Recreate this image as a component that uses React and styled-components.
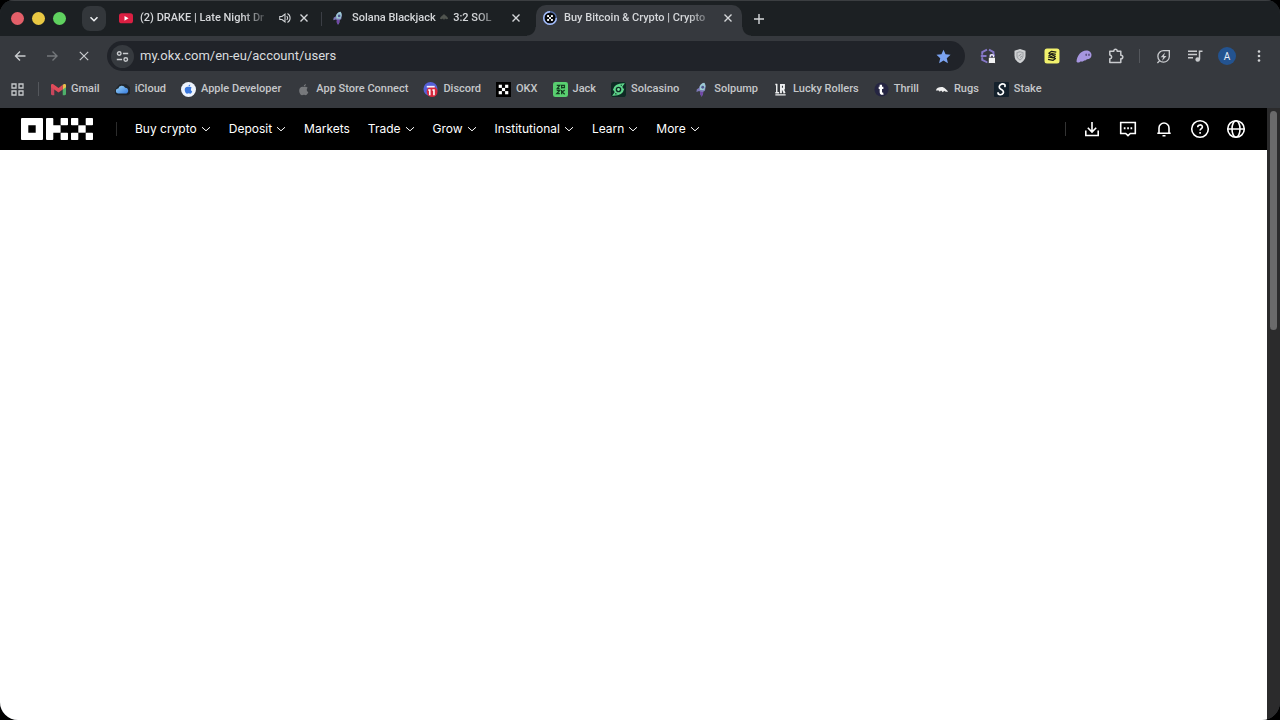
import React from "react";
import styled, { createGlobalStyle } from "styled-components";

const GlobalStyle = createGlobalStyle`
  *, *::before, *::after { box-sizing: border-box; }
  html, body { margin: 0; background: #000; }
  body { font-family: Roboto, "Liberation Sans", sans-serif; }
  button, input { font: inherit; color: inherit; border: 0; background: none; padding: 0; margin: 0; outline: none; }
  button { cursor: pointer; }
  a { color: inherit; text-decoration: none; }
  svg { display: block; flex: none; }
`;

const Window = styled.div`
  display: flex;
  flex-direction: column;
  min-height: 100vh;
  overflow: hidden;
  border-radius: 14px 14px 18px 18px;
  background: #36393e;
`;

const TabStrip = styled.div`
  display: flex;
  align-items: stretch;
  height: 36px;
  padding-left: 11px;
  background: #1c2023;
  border-top: 1px solid #3b3e41;
  color: #d5d7da;
`;

const Lights = styled.div`
  display: flex;
  align-items: center;
  gap: 8px;
`;

const Light = styled.button`
  width: 13px;
  height: 13px;
  border-radius: 50%;
  background: ${(p) => p.$color};
`;

const TabSearch = styled.button`
  display: flex;
  align-items: center;
  justify-content: center;
  align-self: center;
  width: 24px;
  height: 25px;
  margin: 0 6px 0 16px;
  border-radius: 8px;
  background: #33373b;
  color: #eceef0;
`;

const Tab = styled.div`
  position: relative;
  display: flex;
  align-items: center;
  flex: 0 1 206px;
  min-width: 0;
  gap: 7px;
  margin-top: 4px;
  padding: 0 9px 5px 7px;
  border-radius: 10px 10px 0 0;
  font-size: 11px;
  font-weight: 500;
  line-height: 16px;
  background: ${(p) => (p.$active ? "#36393e" : "transparent")};
  &::before, &::after {
    content: ${(p) => (p.$active ? '""' : "none")};
    position: absolute;
    bottom: 0;
    width: 9px;
    height: 9px;
  }
  &::before { right: 100%; background: radial-gradient(circle at 0 0, transparent 8px, #36393e 9px); }
  &::after { left: 100%; background: radial-gradient(circle at 100% 0, transparent 8px, #36393e 9px); }
`;

const TabTitle = styled.span`
  display: flex;
  align-items: center;
  flex: 1;
  min-width: 0;
  overflow: hidden;
  white-space: pre;
  mask-image: linear-gradient(to right, #000 calc(100% - 28px), transparent);
`;

const TabDivider = styled.span`
  align-self: center;
  width: 1px;
  height: 14px;
  margin: 0 2px 0 3px;
  background: ${(p) => (p.$hidden ? "transparent" : "#3b3e45")};
`;

const IconButton = styled.button`
  display: flex;
  align-items: center;
  justify-content: center;
  flex: none;
  width: ${(p) => p.$width || 10}px;
  height: ${(p) => p.$height || 16}px;
  color: ${(p) => (p.$dim ? "#74777b" : "inherit")};
`;

const NewTab = styled(IconButton)`
  align-self: center;
  margin-left: 5px;
`;

const Toolbar = styled.div`
  display: flex;
  align-items: center;
  height: 40px;
  padding: 0 5px 0 4px;
  color: #c9cbce;
`;

const AddressBar = styled.label`
  display: flex;
  align-items: center;
  flex: 1;
  min-width: 0;
  height: 30px;
  margin: 0 7px;
  padding: 0 14px 0 4px;
  border-radius: 15px;
  background: #202329;
`;

const SiteInfo = styled.button`
  display: flex;
  align-items: center;
  justify-content: center;
  width: 23px;
  height: 23px;
  border-radius: 50%;
  background: #363a3f;
`;

const Address = styled.input`
  flex: 1;
  min-width: 0;
  margin-left: 6px;
  font-size: 13px;
  line-height: 18px;
  color: #d9dbde;
`;

const Divider = styled.span`
  flex: none;
  width: ${(p) => p.$width || 1}px;
  height: 14px;
  margin: ${(p) => p.$margin};
  background: ${(p) => p.$color || "#54575c"};
`;

const Avatar = styled.span`
  display: flex;
  align-items: center;
  justify-content: center;
  width: 18px;
  height: 18px;
  border-radius: 50%;
  background: #235390;
  color: #e8eef8;
  font-size: 10px;
`;

const Bookmarks = styled.nav`
  display: flex;
  align-items: center;
  gap: 15px;
  height: 32px;
  padding: 0 10px 6px 11px;
  color: #c5c7ca;
`;

const Bookmark = styled.a`
  display: flex;
  align-items: center;
  flex: none;
  gap: 5px;
  font-size: 11px;
  font-weight: 500;
  line-height: 16px;
  white-space: nowrap;
`;

const Viewport = styled.div`
  display: flex;
  flex: 1;
`;

const Page = styled.div`
  display: flex;
  flex-direction: column;
  flex: 1;
  min-width: 0;
  background: #fff;
`;

const SiteHeader = styled.header`
  display: flex;
  align-items: center;
  justify-content: space-between;
  height: 42px;
  padding: 0 21px;
  background: #000;
  color: #fff;
`;

const HeaderGroup = styled.div`
  display: flex;
  align-items: center;
  gap: ${(p) => p.$gap}px;
`;

const NavItem = styled.button`
  display: flex;
  align-items: center;
  gap: 4px;
  font-family: Inter, "Liberation Sans", sans-serif;
  font-size: 12px;
  line-height: 18px;
  white-space: nowrap;
`;

const Scrollbar = styled.div`
  width: 13px;
  padding: 3px 3px 0;
  background: #2b2b2c;
`;

const Thumb = styled.div`
  width: 7px;
  height: 36%;
  border-radius: 4px;
  background: #6a6a6b;
`;

const Stroke = ({ size = 16, box = 16, width = 1.4, children }) => (
  <svg width={size} height={size} viewBox={`0 0 ${box} ${box}`} fill="none" stroke="currentColor" strokeWidth={width} aria-hidden="true">
    {children}
  </svg>
);

const Close = ({ size = 10 }) => (
  <Stroke size={size} box={10} width={size > 10 ? 1 : 1.4}><path d="M1.500 1.500l7 7M8.500 1.500l-7 7" /></Stroke>
);

const Chevron = () => (
  <Stroke size={10} box={10} width={1}><path d="M1 3.200l4 3.600 4-3.600" /></Stroke>
);

const Art = ({ size = 15, children }) => (
  <svg width={size} height={size} viewBox="0 0 16 16" aria-hidden="true">{children}</svg>
);

const YouTube = () => (
  <Art size={14}>
    <rect x="0" y="2.5" width="16" height="11.5" rx="3" fill="#db1f42" />
    <path d="M6.3 5.6l4.6 2.7-4.6 2.7z" fill="#fff" />
  </Art>
);

const Rocket = ({ size }) => (
  <Art size={size}>
    <path d="M10.800.8C7.800 1.400 5.800 3.400 5.600 6L3 7.600l-.4 3 2.800-.9 1.400.7-.3 2.200L8 15.600l1.600-2.300.3-2.900 1.800-1 .7-4.200c0-1.900-.5-3.400-1.600-4.400z" fill="#7d79b8" />
    <path d="M10.800.8C8.300 1.400 6.500 3 6 5.200l.3 3.300 4.600.4 1.200-3.800C12.200 3.300 11.700 1.800 10.800.8z" fill="#9ccbd2" />
    <circle cx="9.300" cy="5.600" r="1.500" fill="#4e5690" />
    <path d="M6.600 10.300l3.100.3-.4 2.800L8 15.600l-1.400-2.800z" fill="#7146a5" />
  </Art>
);

const checker = (x, y, s) => [[0, 0], [2, 0], [1, 1], [0, 2], [2, 2]].map(([c, r]) => (
  <rect key={`${c}${r}`} x={x + c * s} y={y + r * s} width={s} height={s} />
));

const LoadingOkx = () => (
  <Art size={14}>
    <circle cx="8" cy="8" r="7.200" fill="#07090c" stroke="#526ba3" strokeWidth="1.600" />
    <path d="M8 .8A7.200 7.200 0 1 0 15.200 8" fill="none" stroke="#a5bdf8" strokeWidth="1.600" />
    <g fill="#fff">{checker(4.7, 4.7, 2.2)}</g>
  </Art>
);

const Speaker = () => (
  <Stroke size={12} width={1.4}>
    <path d="M1 6v4h3l4 3.300V2.700L4 6zM10.300 5.400c1.600 1.300 1.600 3.900 0 5.200M11.300 2c4.700 2.500 4.700 9.500 0 12" />
  </Stroke>
);

const Spade = () => (
  <svg width="12" height="12" viewBox="0 0 12 12" aria-hidden="true">
    <path d="M6 2c.8 1.500 4 2.700 4 4.300 0 1-1.600 1.200-2.500.4L7 6.500 6 8 5 6.500l-.5.2C3.600 7.500 2 7.300 2 6.300 2 4.700 5.200 3.500 6 2z" fill="#50544f" />
  </svg>
);

const Arrow = ({ flip }) => (
  <Stroke size={16} width={1.4}>
    <path d={flip ? "M3 8h10M8.500 3.500L13 8l-4.500 4.500" : "M13.500 8h-10M8 3.500L3.500 8 8 12.500"} />
  </Stroke>
);

const Tune = () => (
  <Stroke size={13} width={1.7}>
    <circle cx="4" cy="4.300" r="2.200" /><path d="M8.500 4.300H15M1 11.700h6.500" /><circle cx="12" cy="11.700" r="2.200" />
  </Stroke>
);

const Star = () => (
  <Art size={15}>
    <path d="M8 .8l2.200 4.900 5.300.5-4 3.600 1.200 5.300L8 12.300l-4.700 2.800 1.200-5.300-4-3.600 5.300-.5z" fill="#7ba3f2" />
  </Art>
);

const BracketLock = () => (
  <Art size={16}>
    <g fill="none" stroke="#8577c6" strokeWidth="1.900">
      <path d="M7 1.600L2.200 4.100v2.600M.8 8h5.700M2.200 9.300v2.500L7.500 14.500" />
      <path d="M9 1.600l4.500 2.500v2.600M9.500 7.500H15" />
    </g>
    <rect x="8.300" y="9.200" width="7.200" height="6.300" rx=".8" fill="#f2f2f3" stroke="#202124" strokeWidth=".8" />
    <path d="M10.200 9.200V8.300a1.700 1.700 0 0 1 3.400 0v.9" fill="none" stroke="#f2f2f3" strokeWidth="1.200" />
  </Art>
);

const Shield = () => (
  <Art size={16}>
    <path d="M8 1l5.500 1.700v5.100c0 3.600-2.500 6-5.500 7.500-3-1.500-5.500-3.900-5.500-7.500V2.700z" fill="#cfd1d3" />
    <path d="M8 3.700l3 1v3.200c0 1.700-1.300 3.100-3 4.100-1.700-1-3-2.400-3-4.100V4.700z" fill="none" stroke="#a3a6aa" strokeWidth="1.200" />
    <path d="M6.500 8l3-2M8 9.500l2-1.500" stroke="#94979b" />
  </Art>
);

const YellowS = () => (
  <Art size={16}>
    <rect x=".5" y=".5" width="15" height="15" rx="2.500" fill="#f2f26d" />
    <g fill="none" stroke="#1e1f16" strokeWidth="1.200" strokeLinejoin="round">
      <path d="M12.300 4.200L7.500 3.300 4.800 5.300l6.500 3.100-2 1.600L4 9M11.800 6.300L8 5.600 5 7.500l6.500 3-2.300 1.800L4 11.300" />
    </g>
  </Art>
);

const Ghost = () => (
  <Art size={16}>
    <path d="M.5 13.500C1 7.500 5 2.500 10.200 2.500c3.200 0 5.300 1.800 5.300 4.500 0 3-2.400 4.400-4.600 4.300-.8 1.100-1.800 1.500-2.700 1.200-.9 1-2.200 1.500-3.300.8C3.600 14.700 1 15.200.5 13.500z" fill="#a796e0" />
    <rect x="9.500" y="5.500" width="1.400" height="2.600" rx=".7" fill="#5b5080" /><rect x="12.300" y="5.500" width="1.400" height="2.600" rx=".7" fill="#5b5080" />
  </Art>
);

const Puzzle = () => (
  <Stroke size={16} width={1.5}>
    <path d="M1.800 3.200h4c-.2-2.700 3.600-2.700 3.400 0h3.600v4c2.700 0 2.700 3.600 0 3.600v3.600h-11v-3.700c2.400.2 2.400-3.600 0-3.600z" strokeLinejoin="round" />
  </Stroke>
);

const Energy = () => (
  <Stroke size={15} width={1.4}>
    <path d="M14.200 1.800v6.400a6.100 6.100 0 1 1-6.100-6.400zM3.600 12.800L1.500 15" />
    <path d="M9.600 3.800L5 8.700h2.700l-1.300 4 4.800-5.300H8.500z" fill="currentColor" stroke="none" />
  </Stroke>
);

const Queue = () => (
  <Stroke size={16} width={1.5}>
    <path d="M1 3.300h9M1 6.500h9M1 9.700h5M12.500 11.500V3.300h3" /><circle cx="10.700" cy="11.500" r="1.600" fill="currentColor" />
  </Stroke>
);

const Dots = () => (
  <Art size={16}><g fill="#d2d4d6"><circle cx="8" cy="3.500" r="1.300" /><circle cx="8" cy="8" r="1.300" /><circle cx="8" cy="12.500" r="1.300" /></g></Art>
);

const Apps = () => (
  <Stroke size={13} box={13} width={1.3}>
    <path d="M1 1h4v4H1zM8 1h4v4H8zM1 8h4v4H1zM8 8h4v4H8z" />
  </Stroke>
);

const Gmail = () => (
  <Art>
    <path d="M0 4h3.500v10H1.200A1.200 1.200 0 0 1 0 12.800z" fill="#c8465c" />
    <path d="M12.500 4H16v8.800a1.200 1.200 0 0 1-1.200 1.200h-2.300z" fill="#4fb06a" />
    <path d="M12.500 3l1-.7A1.600 1.600 0 0 1 16 3.700v1.800l-3.500 2.600z" fill="#e8c04c" />
    <path d="M0 3.700a1.600 1.600 0 0 1 2.500-1.400L8 6.500l4.500-3.500v5L8 11.300 0 5.500z" fill="#e14b59" />
  </Art>
);

const ICloud = () => (
  <Art>
    <defs><linearGradient id="cloud" x1="0" x2="1" y2="1"><stop stopColor="#9dd7f6" /><stop offset="1" stopColor="#367be0" /></linearGradient></defs>
    <path d="M2.500 5L5 2.500h7l4 3V12l-2 2H2l-2-2V8.500z" fill="#20262b" />
    <path d="M3.800 12.300a2.700 2.700 0 0 1-.3-5.400 3.900 3.900 0 0 1 7.300-.7 3.200 3.200 0 0 1 1.500 6.100z" fill="url(#cloud)" />
  </Art>
);

const applePath = "M10.600 2c-.9.100-2.200.9-2.400 2.500 1.200.1 2.400-1 2.400-2.500zM12.500 6.200c-1.300-1.500-2.900-1.300-4.100-.8-1.400-.6-2.700-.5-3.900.6C2 8.600 4.300 14 6.400 14c.7 0 1.200-.5 2.100-.5s1.400.5 2.100.5c1 0 2-1.700 2.500-3-2-.9-2.200-3.600-.6-4.800z";

const AppleBlue = () => (
  <Art><circle cx="8" cy="8" r="8" fill="#edf3fc" /><path d={applePath} fill="#3977dc" transform="translate(1.200 1) scale(.82)" /></Art>
);

const AppleGrey = () => <Art><path d={applePath} fill="#77797c" /></Art>;

const Discord = () => (
  <Art>
    <circle cx="8" cy="7.500" r="7.500" fill="#5560d8" />
    <circle cx="9.700" cy="10.200" r="5.800" fill="#d7283d" />
    <path d="M4 5h8.500" stroke="#f4f0ff" strokeWidth="1.800" />
    <path d="M5.500 8.600h1.700v5.400M10 8.600h1.700v5.400" fill="none" stroke="#fff" strokeWidth="1.700" />
  </Art>
);

const OkxIcon = () => <Art><rect width="16" height="16" fill="#000" /><g fill="#fff">{checker(2.9, 2.9, 3.4)}</g></Art>;

const Jack = () => (
  <Art>
    <rect width="16" height="16" rx="2.500" fill="#59cf70" />
    <g fill="none" stroke="#143d20" strokeWidth="1.300"><path d="M4 3.500h3.200L4.500 7H7M9.200 7V3.500h3V6H9.500M4 9h3.200L4 12.500h3.200M9.200 8.500v4.500M12.500 8.500L9.800 10.700l2.700 2.300" /></g>
  </Art>
);

const Solcasino = () => (
  <Art>
    <rect width="16" height="16" rx="3" fill="#0e2a24" />
    <circle cx="8" cy="8" r="4" fill="none" stroke="#5fd68b" strokeWidth="2" />
    <path d="M2.500 9C3.500 4 8 2 13.500 2L11 5.500M13.500 7c-1 5-5.500 7-11 7L5 10.500" fill="none" stroke="#5fd68b" strokeWidth="1.300" />
    <circle cx="8" cy="8" r="1.500" fill="#76e39c" />
  </Art>
);

const Lucky = () => (
  <Art>
    <path d="M4 2v10M2.500 2.700h2M2.500 13.700h11M2.500 11.500h4" fill="none" stroke="#f0f1f2" strokeWidth="1.500" />
    <path d="M8.500 12V3h3.200v4H9.200M10.200 7l2.200 5" fill="none" stroke="#f0f1f2" strokeWidth="2" />
  </Art>
);

const Thrill = () => (
  <Art>
    <circle cx="8" cy="8" r="7.500" fill="#252542" />
    <path d="M7.300 2.800v8.200c0 1.500 1 1.600 2.700 1.300M5 6.200h5" fill="none" stroke="#fff" strokeWidth="2.500" />
  </Art>
);

const Rugs = () => (
  <Art>
    <path d="M2 9C2.800 6.500 5 5.400 8 5.400c3.300 0 4.300 2.500 7 4.600-1.500.9-3.200.3-4.200-.6L9.500 10.800 7.500 9l-1.300 1.500L5 9z" fill="#f0f0f0" />
  </Art>
);

const Stake = () => (
  <Art>
    <rect width="16" height="16" rx="1" fill="#14212c" />
    <path d="M11.700 4.800C12.600 2.400 10 1.700 8 2.300 5.200 3.200 4.800 6.200 7 7.400c2.800 1.500 3.800 2.600 2.800 4.500C8.600 14.300 4.300 14.200 4.300 11.500" fill="none" stroke="#fff" strokeWidth="1.800" strokeLinecap="round" />
  </Art>
);

const OkxLogo = () => (
  <svg width="72" height="22" viewBox="0 0 72 22" fill="#fff" role="img" aria-label="OKX">
    <path fillRule="evenodd" d="M1 0h20a1 1 0 0 1 1 1v20a1 1 0 0 1-1 1H1a1 1 0 0 1-1-1V1a1 1 0 0 1 1-1zM7.300 7.300v7.400h7.400V7.300z" />
    <path d="M26 0h5.300a1 1 0 0 1 1 1v6.300h7.300v7.400h-7.300V21a1 1 0 0 1-1 1H26a1 1 0 0 1-1-1V1a1 1 0 0 1 1-1z" />
    <rect x="39.600" width="7.400" height="7.300" rx=".8" /><rect x="39.600" y="14.700" width="7.400" height="7.300" rx=".8" />
    <rect x="50" width="7.300" height="7.300" rx=".8" /><rect x="64.700" width="7.300" height="7.300" rx=".8" />
    <rect x="57.300" y="7.300" width="7.400" height="7.400" />
    <rect x="50" y="14.700" width="7.300" height="7.300" rx=".8" /><rect x="64.700" y="14.700" width="7.300" height="7.300" rx=".8" />
  </svg>
);

const headerActions = [
  ["Download", <path d="M10 3v9.500M5.800 8.800L10 13l4.200-4.200M3.800 11.500v5h12.400v-5" />],
  ["Messages", <><path d="M2.700 3.500h14.600v11h-5L10 16.700l-2.300-2.200h-5z" /><path d="M5.800 9.200h1.700M9.200 9.200h1.700M12.500 9.200h1.700" strokeWidth="2" /></>],
  ["Notifications", <><path d="M5 14V9a5 5 0 0 1 10 0v5M3.300 14.300h13.400" /><path d="M8.500 16.800h3" /></>],
  ["Help", <><circle cx="10" cy="10" r="8.300" /><path d="M7.700 8.200c0-3 4.700-3 4.700-.2 0 1.700-2.300 1.700-2.300 3.600M10.100 13v1.700" /></>],
  ["Language", <><circle cx="10" cy="10" r="8.300" /><ellipse cx="10" cy="10" rx="4" ry="8.300" /><path d="M1.700 10h16.600" /></>],
];

const bookmarks = [
  ["Gmail", Gmail], ["iCloud", ICloud], ["Apple Developer", AppleBlue], ["App Store Connect", AppleGrey],
  ["Discord", Discord], ["OKX", OkxIcon], ["Jack", Jack], ["Solcasino", Solcasino], ["Solpump", Rocket],
  ["Lucky Rollers", Lucky], ["Thrill", Thrill], ["Rugs", Rugs], ["Stake", Stake],
];

const extensions = [["Wallet", BracketLock], ["Shield", Shield], ["Swap", YellowS], ["Phantom", Ghost], ["Extensions", Puzzle]];

const navItems = ["Buy crypto", "Deposit", "Markets", "Trade", "Grow", "Institutional", "Learn", "More"];

export default function App() {
  return (
    <>
      <GlobalStyle />
      <Window>
        <TabStrip>
          <Lights>
            <Light $color="#e35f69" aria-label="Close window" />
            <Light $color="#e9c843" aria-label="Minimise window" />
            <Light $color="#5fd15f" aria-label="Zoom window" />
          </Lights>
          <TabSearch aria-label="Search tabs">
            <Stroke size={10} box={10} width={1.6}><path d="M1.500 3.200L5 6.700l3.500-3.500" /></Stroke>
          </TabSearch>
          <Tab>
            <YouTube />
            <TabTitle>(2) DRAKE | Late Night Dr</TabTitle>
            <IconButton $width={14} aria-label="Mute tab"><Speaker /></IconButton>
            <IconButton aria-label="Close tab"><Close /></IconButton>
          </Tab>
          <TabDivider />
          <Tab>
            <Rocket size={14} />
            <TabTitle>Solana Blackjack <Spade /> 3:2 SOL</TabTitle>
            <IconButton aria-label="Close tab"><Close /></IconButton>
          </Tab>
          <TabDivider $hidden />
          <Tab $active>
            <LoadingOkx />
            <TabTitle>Buy Bitcoin &amp; Crypto | Crypto</TabTitle>
            <IconButton aria-label="Close tab"><Close /></IconButton>
          </Tab>
          <NewTab $width={24} $height={24} aria-label="New tab">
            <Stroke size={10} box={10} width={1.4}><path d="M5 0v10M0 5h10" /></Stroke>
          </NewTab>
        </TabStrip>

        <Toolbar>
          <IconButton $width={32} $height={32} aria-label="Back"><Arrow /></IconButton>
          <IconButton $width={32} $height={32} $dim aria-label="Forward"><Arrow flip /></IconButton>
          <IconButton $width={32} $height={32} aria-label="Stop loading"><Close size={12} /></IconButton>
          <AddressBar>
            <SiteInfo aria-label="Site information"><Tune /></SiteInfo>
            <Address aria-label="Address" defaultValue="my.okx.com/en-eu/account/users" />
            <IconButton $width={16} aria-label="Edit bookmark"><Star /></IconButton>
          </AddressBar>
          {extensions.map(([name, Icon]) => (
            <IconButton key={name} $width={32} $height={32} aria-label={name}><Icon /></IconButton>
          ))}
          <Divider $margin="0 7px" />
          <IconButton $width={32} $height={32} aria-label="Performance"><Energy /></IconButton>
          <IconButton $width={32} $height={32} aria-label="Media controls"><Queue /></IconButton>
          <IconButton $width={32} $height={32} aria-label="Profile"><Avatar>A</Avatar></IconButton>
          <IconButton $width={32} $height={32} aria-label="Menu"><Dots /></IconButton>
        </Toolbar>

        <Bookmarks aria-label="Bookmarks">
          <IconButton $width={13} aria-label="Apps"><Apps /></IconButton>
          <Divider $margin="0 -3px 0 -1px" />
          {bookmarks.map(([name, Icon]) => (
            <Bookmark key={name} href="#"><Icon />{name}</Bookmark>
          ))}
        </Bookmarks>

        <Viewport>
          <Page>
            <SiteHeader>
              <HeaderGroup $gap={18}>
                <OkxLogo />
                <Divider $margin="0 0 0 5px" $color="#2c2c2c" />
                {navItems.map((name) => (
                  <NavItem key={name}>{name}{name !== "Markets" && <Chevron />}</NavItem>
                ))}
              </HeaderGroup>
              <HeaderGroup $gap={16}>
                <Divider $margin="0" $color="#333" />
                {headerActions.map(([name, drawing]) => (
                  <IconButton key={name} $width={20} $height={20} aria-label={name}>
                    <Stroke size={20} box={20} width={1.6}>{drawing}</Stroke>
                  </IconButton>
                ))}
              </HeaderGroup>
            </SiteHeader>
          </Page>
          <Scrollbar><Thumb /></Scrollbar>
        </Viewport>
      </Window>
    </>
  );
}
